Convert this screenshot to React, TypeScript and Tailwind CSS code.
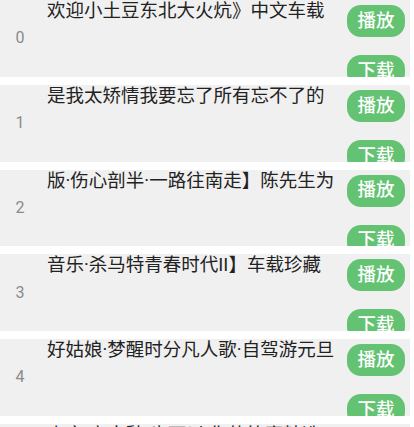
const songs = [
  '欢迎小土豆东北大火炕》中文车载',
  '是我太矫情我要忘了所有忘不了的',
  '版·伤心剖半·一路往南走】陈先生为',
  '音乐·杀马特青春时代II】车载珍藏',
  '好姑娘·梦醒时分凡人歌·自驾游元旦',
  '嘉宾·离人愁·也可以·你的答案精选',
];

function SongRow({ index, title }: { index: number; title: string }) {
  return (
    <div className="flex h-[76.75px] mb-2 mr-1 bg-[#f0f0f0] overflow-hidden">
      <div className="w-10 shrink-0 flex items-center justify-center text-[16px] text-[#8a8a8a]">
        {index}
      </div>
      <div className="flex-1 ml-[7px] pt-[1px] text-[18.5px] leading-[20px] text-[#222] whitespace-nowrap overflow-hidden">
        {title}
      </div>
      <div className="w-[58px] shrink-0 mr-[5px] pt-[5px] flex flex-col gap-[18px]">
        <button className="h-[32px] shrink-0 rounded-[14px] bg-[#63c372] text-white text-[18.5px] font-medium leading-none">
          播放
        </button>
        <button className="h-[32px] shrink-0 rounded-[14px] bg-[#63c372] text-white text-[18.5px] font-medium leading-none">
          下载
        </button>
      </div>
    </div>
  );
}

export default function App() {
  return (
    <div
      className="w-[414px] h-[427px] overflow-hidden bg-white"
      style={{ fontFamily: 'Roboto, "Noto Sans CJK SC", sans-serif' }}
    >
      {songs.map((title, i) => (
        <SongRow key={i} index={i} title={title} />
      ))}
    </div>
  );
}
